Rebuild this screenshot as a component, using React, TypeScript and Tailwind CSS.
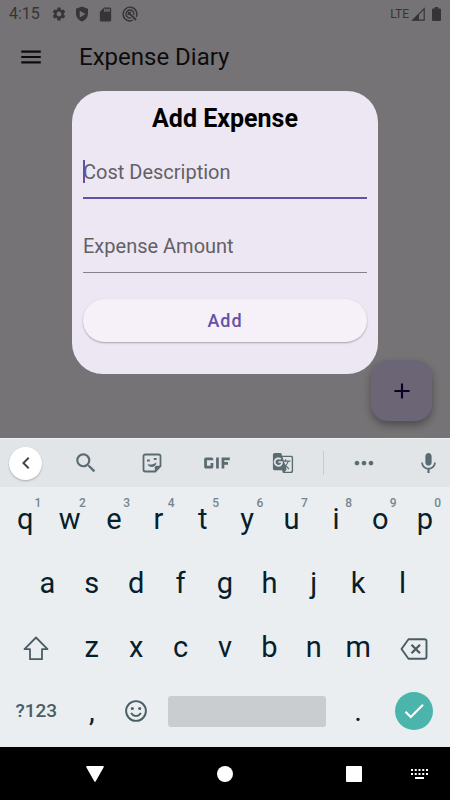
import { useState, type ReactNode } from "react";
import {
  MdAdd,
  MdCheck,
  MdChevronLeft,
  MdGTranslate,
  MdGif,
  MdMenu,
  MdMic,
  MdMoreHoriz,
  MdSdCard,
  MdSearch,
  MdSettings,
} from "react-icons/md";

const NUMBER_HINTS = ["1", "2", "3", "4", "5", "6", "7", "8", "9", "0"];
const TOP_ROW = "qwertyuiop".split("");
const HOME_ROW = "asdfghjkl".split("");
const BOTTOM_ROW = "zxcvbnm".split("");

function ShieldPlayIcon() {
  return (
    <svg viewBox="0 0 24 28" className="h-4 w-3.5" fill="currentColor" aria-hidden="true">
      <path
        fillRule="evenodd"
        d="M12 1 1.500 5v8c0 6.500 4.500 12 10.500 14 6-2 10.500-7.500 10.500-14V5L12 1Zm-4 7.500L18 14l-10 6V8.500Z"
      />
    </svg>
  );
}

function SearchCircleIcon() {
  return (
    <svg viewBox="0 0 24 24" className="size-4" fill="none" stroke="currentColor" aria-hidden="true">
      <path strokeWidth="2.200" d="M16.500 21.300A10.300 10.300 0 1 1 21.300 16.500" />
      <path strokeWidth="2" d="M13.500 17.800A6 6 0 1 1 17.800 13.500" />
      <path strokeWidth="2.800" d="m9.500 9.500 11.500 11.500" />
      <path d="M8.500 8.500h6l-6 6Z" fill="currentColor" stroke="none" />
    </svg>
  );
}

function SignalIcon() {
  return (
    <svg viewBox="0 0 14 14" className="size-3.5" aria-hidden="true">
      <path d="M1.800 13.200 13.200 1.600v11.600Z" fill="none" stroke="currentColor" strokeWidth="1.200" />
      <path d="M1 13.500 8 6.500v7Z" fill="currentColor" />
    </svg>
  );
}

function BatteryIcon() {
  return (
    <svg viewBox="0 0 9 14" className="h-3.5 w-[9px]" fill="currentColor" aria-hidden="true">
      <path d="M2.800 0h3.400v1.400H8a1 1 0 0 1 1 1V13a1 1 0 0 1-1 1H1a1 1 0 0 1-1-1V2.400a1 1 0 0 1 1-1h1.800Z" />
    </svg>
  );
}

function StickerIcon() {
  return (
    <svg viewBox="0 0 20 20" className="size-5" fill="none" stroke="currentColor" strokeWidth="1.800" aria-hidden="true">
      <path d="M3.200 1.500h13.600a1.700 1.700 0 0 1 1.700 1.700v10L13.200 18.500h-10a1.700 1.700 0 0 1-1.700-1.700V3.200a1.700 1.700 0 0 1 1.700-1.700Z" strokeLinejoin="round" />
      <path d="M12.800 18.500v-4.200a1.500 1.500 0 0 1 1.500-1.500h4.200l-5.700 5.700Z" fill="currentColor" stroke="none" />
      <path d="M5 7.500h2.800M11.800 6h2.800" />
      <path d="M5.500 11.200c3 .8 6.500.2 9-2-.3 3.300-2.500 4.700-4.600 4.700-2 0-3.700-1-4.400-2.700Z" fill="currentColor" stroke="none" />
    </svg>
  );
}

function ShiftIcon() {
  return (
    <svg viewBox="0 0 26 25" className="h-[25px] w-[26px]" fill="none" stroke="currentColor" strokeWidth="1.800" strokeLinejoin="round" aria-hidden="true">
      <path d="M13 1.500 24.500 13.200H19v10H7v-10H1.500Z" />
    </svg>
  );
}

function DeleteIcon() {
  return (
    <svg viewBox="0 0 28 22" className="h-[22px] w-7" fill="none" stroke="currentColor" strokeWidth="1.900" strokeLinejoin="round" aria-hidden="true">
      <path d="M8.500 1.200h16a2 2 0 0 1 2 2v15.600a2 2 0 0 1-2 2h-16L1.500 11Z" />
      <path strokeWidth="2.300" d="m11.500 6.800 8.500 8.500m0-8.500-8.500 8.500" />
    </svg>
  );
}

function SmileIcon() {
  return (
    <svg viewBox="0 0 22 22" className="size-[22px]" fill="none" stroke="currentColor" strokeWidth="1.900" aria-hidden="true">
      <circle cx="11" cy="11" r="9.900" />
      <circle cx="7.300" cy="8.500" r="1.500" fill="currentColor" stroke="none" />
      <circle cx="14.700" cy="8.500" r="1.500" fill="currentColor" stroke="none" />
      <path d="M6.200 12.800c1 2.100 2.800 3.100 4.800 3.100s3.800-1 4.800-3.100" />
    </svg>
  );
}

function KeyboardDotsIcon() {
  return (
    <svg viewBox="0 0 17 10" className="h-2.5 w-[17px]" fill="currentColor" aria-hidden="true">
      {[0, 4].map((y) =>
        [0, 3.75, 7.5, 11.25, 15].map((x) => <rect key={`${x}-${y}`} x={x} y={y} width="2" height="2" />),
      )}
      <rect x="4" y="8" width="9" height="2" />
    </svg>
  );
}

function StatusBar() {
  return (
    <div className="flex h-7 items-center justify-between px-[9px] text-[#757575]">
      <div className="flex items-center gap-2">
        <span className="mr-[3px] text-[16px] leading-5">4:15</span>
        <MdSettings className="size-4" aria-hidden="true" />
        <ShieldPlayIcon />
        <MdSdCard className="size-[17px]" aria-hidden="true" />
        <SearchCircleIcon />
      </div>
      <div className="flex items-center">
        <span className="mr-0.5 text-[12px] leading-5">LTE</span>
        <SignalIcon />
        <span className="ml-[7px]">
          <BatteryIcon />
        </span>
      </div>
    </div>
  );
}

function ExpenseDialog() {
  const [description, setDescription] = useState("");
  const [amount, setAmount] = useState("");

  return (
    <div className="absolute inset-0 flex items-center bg-black/54 px-[72px] pt-[26px]">
      <form
        role="dialog"
        aria-labelledby="dialog-title"
        className="flex w-full flex-col rounded-[31px] bg-[#ede7f3] px-[11px] pt-3 pb-8"
        onSubmit={(event) => event.preventDefault()}
      >
        <h2 id="dialog-title" className="text-center text-[25px] leading-8 font-bold text-black">
          Add Expense
        </h2>
        <div className="relative mt-3">
          <input
            type="text"
            aria-label="Cost Description"
            placeholder="Cost Description"
            value={description}
            onChange={(event) => setDescription(event.target.value)}
            className="block h-[52px] w-full border-b-2 border-[#6750a4] bg-transparent text-[20px] text-[#1c1b1f] outline-none placeholder:text-[#636066]"
          />
          <span className="absolute top-[13px] left-0 h-[23px] w-0.5 bg-[#6750a4]" />
        </div>
        <input
          type="text"
          inputMode="decimal"
          aria-label="Expense Amount"
          placeholder="Expense Amount"
          value={amount}
          onChange={(event) => setAmount(event.target.value)}
          className="mt-[22px] block h-[52px] w-full border-b border-[#858089] bg-transparent text-[20px] text-[#1c1b1f] outline-none placeholder:text-[#636066]"
        />
        <button
          type="submit"
          className="mt-[26px] h-[43px] rounded-full bg-[#f6f1f9] text-[18px] font-medium tracking-wider text-[#6750a4] shadow-[0_1px_2px_rgba(0,0,0,0.3)]"
        >
          Add
        </button>
      </form>
    </div>
  );
}

function ToolbarButton({ label, children }: { label: string; children: ReactNode }) {
  return (
    <button type="button" aria-label={label} className="flex flex-1 items-center justify-center">
      {children}
    </button>
  );
}

function KeyboardToolbar() {
  return (
    <div className="flex h-[49px] items-stretch border-t border-[#eff1f2] bg-[#e1e5e8] text-[#5a6b72]">
      <div className="flex w-[51px] items-center justify-end pr-[9px]">
        <button
          type="button"
          aria-label="Close toolbar"
          className="flex size-[33px] items-center justify-center rounded-full bg-white text-[#444444] shadow-[0_1px_2px_rgba(0,0,0,0.25)]"
        >
          <MdChevronLeft className="size-6" />
        </button>
      </div>
      <div className="mr-[7px] ml-0.5 flex flex-1">
        <ToolbarButton label="Search">
          <MdSearch className="size-[26px]" />
        </ToolbarButton>
        <ToolbarButton label="Stickers">
          <StickerIcon />
        </ToolbarButton>
        <ToolbarButton label="GIF">
          <MdGif className="size-11" />
        </ToolbarButton>
        <ToolbarButton label="Translate">
          <MdGTranslate className="size-[22px]" />
        </ToolbarButton>
      </div>
      <div className="my-3 w-px bg-[#c6cccf]" />
      <button type="button" aria-label="More" className="flex w-[82px] items-center justify-center pr-0.5">
        <MdMoreHoriz className="size-7" />
      </button>
      <button type="button" aria-label="Voice input" className="flex w-11 items-center justify-center">
        <MdMic className="size-[25px]" />
      </button>
    </div>
  );
}

function LetterKey({ letter, hint, className = "" }: { letter: string; hint?: string; className?: string }) {
  return (
    <button
      type="button"
      className={`relative col-span-2 flex items-center justify-center text-[29px] leading-8 text-[#06202b] ${className}`}
    >
      {letter}
      {hint && (
        <span className="absolute top-2 right-1.5 text-[12px] leading-4 font-medium text-[#78858b]">{hint}</span>
      )}
    </button>
  );
}

function Keyboard() {
  return (
    <section aria-label="Keyboard" className="bg-[#eaeef1]">
      <KeyboardToolbar />
      <div className="grid auto-rows-[64px] grid-cols-20 px-[3px] pb-1 text-[#4a5c64]">
        {TOP_ROW.map((letter, index) => (
          <LetterKey key={letter} letter={letter} hint={NUMBER_HINTS[index]} />
        ))}
        {HOME_ROW.map((letter, index) => (
          <LetterKey key={letter} letter={letter} className={index === 0 ? "col-start-2" : ""} />
        ))}
        <button type="button" aria-label="Shift" className="col-span-3 col-start-1 flex items-center justify-center pt-0.5">
          <ShiftIcon />
        </button>
        {BOTTOM_ROW.map((letter) => (
          <LetterKey key={letter} letter={letter} />
        ))}
        <button type="button" aria-label="Backspace" className="col-span-3 flex items-center justify-center pt-1">
          <DeleteIcon />
        </button>
        <button type="button" className="col-span-3 flex items-center justify-center text-[19px] leading-8 font-medium">
          ?123
        </button>
        <LetterKey letter="," />
        <button type="button" aria-label="Emoji" className="col-span-2 flex items-center justify-center">
          <SmileIcon />
        </button>
        <button
          type="button"
          aria-label="Space"
          className="col-span-8 mx-[10px] h-[31px] self-center rounded-[3px] bg-[#c9cdd0]"
        />
        <LetterKey letter="." />
        <button type="button" aria-label="Done" className="col-span-3 flex items-center justify-center">
          <span className="flex size-[38px] items-center justify-center rounded-full bg-[#4bb5ab] text-white">
            <MdCheck className="size-[26px]" />
          </span>
        </button>
      </div>
    </section>
  );
}

function NavigationBar() {
  return (
    <nav className="flex h-[53px] items-stretch bg-black pr-[10px] pl-[50px] text-white">
      <div className="flex flex-1 gap-10">
        <button type="button" aria-label="Back" className="flex flex-1 items-center justify-center">
          <svg viewBox="0 0 18 16" className="h-4 w-[18px]" fill="currentColor" aria-hidden="true">
            <path d="M1 0h16a.8.8 0 0 1 .7 1.200L9.600 15.500a.7.7 0 0 1-1.200 0L.3 1.200A.8.8 0 0 1 1 0Z" />
          </svg>
        </button>
        <button type="button" aria-label="Home" className="flex flex-1 items-center justify-center">
          <span className="size-4 rounded-full bg-white" />
        </button>
        <button type="button" aria-label="Recent apps" className="flex flex-1 items-center justify-center">
          <span className="size-4 rounded-[1px] bg-white" />
        </button>
      </div>
      <button type="button" aria-label="Switch keyboard" className="flex w-[41px] items-center justify-center">
        <KeyboardDotsIcon />
      </button>
    </nav>
  );
}

export default function App() {
  return (
    <div className="flex min-h-screen flex-col font-[Roboto,sans-serif]">
      <main className="relative flex flex-1 flex-col bg-[#fffbfe]">
        <StatusBar />
        <header className="flex h-[58px] items-center pl-[18px]">
          <button type="button" aria-label="Open menu" className="text-[#1c1b1f]">
            <MdMenu className="size-[26px]" />
          </button>
          <h1 className="ml-[35px] text-[24px] leading-8 text-[#1c1b1f]">Expense Diary</h1>
        </header>
        <button
          type="button"
          aria-label="Add expense"
          className="mt-auto mr-[18px] mb-[17px] flex size-[61px] items-center justify-center self-end rounded-[17px] bg-[#eaddff] text-[#21005d] shadow-[0_4px_8px_rgba(0,0,0,0.35)]"
        >
          <MdAdd className="size-[26px]" />
        </button>
        <ExpenseDialog />
      </main>
      <Keyboard />
      <NavigationBar />
    </div>
  );
}
